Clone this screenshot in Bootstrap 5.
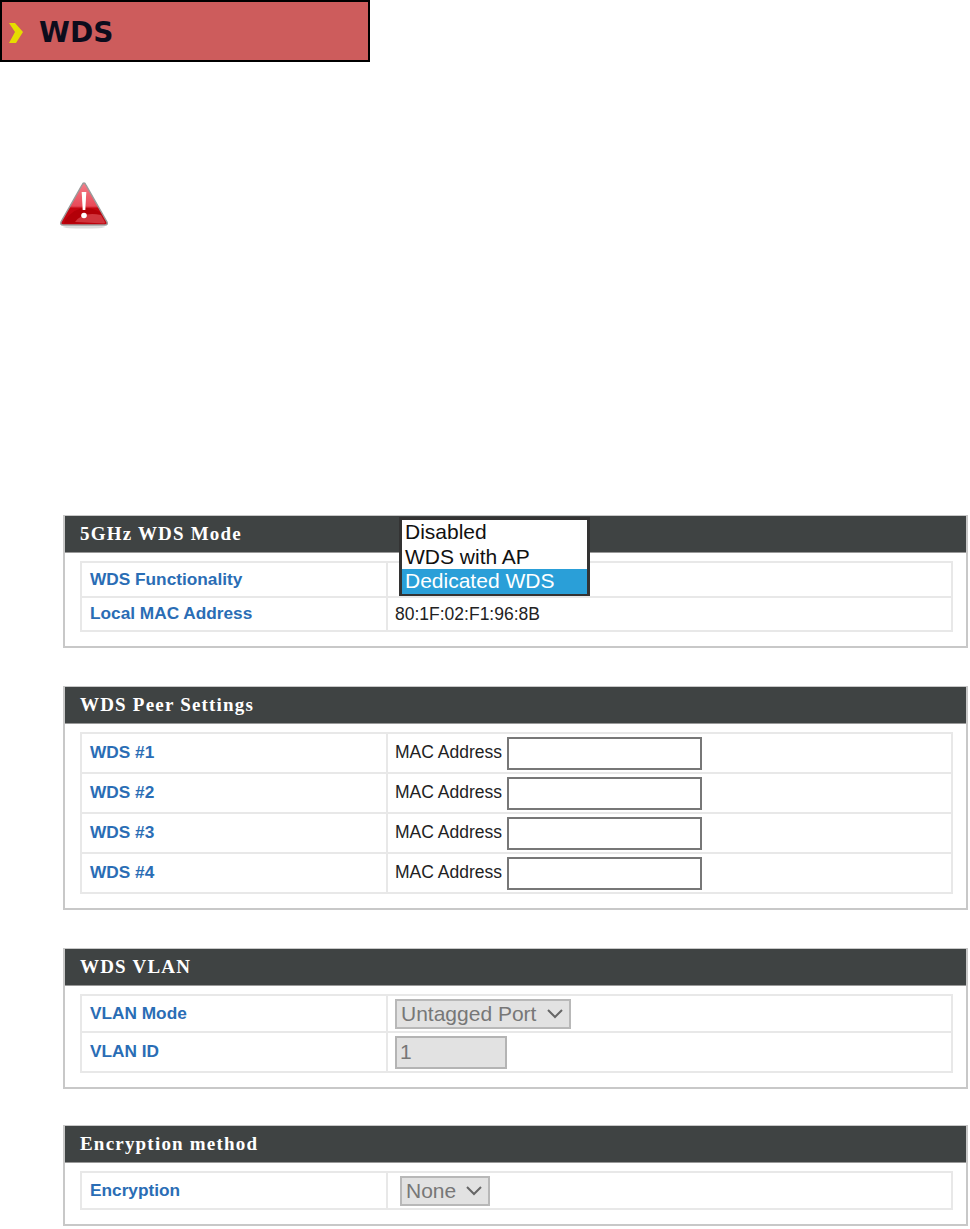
<!DOCTYPE html>
<html lang="en">
<head>
<meta charset="utf-8">
<title>WDS</title>
<link href="https://cdn.jsdelivr.net/npm/bootstrap@5.3.0/dist/css/bootstrap.min.css" rel="stylesheet">
<style>
html,body{background:#fff;margin:0;padding:0}
body{font-family:"Liberation Sans",Arial,sans-serif;color:#111;height:1229px;overflow:hidden}
.page-banner{width:370px;height:62px;background:#cd5c5c;border:2px solid #000;display:flex;align-items:center;gap:15px;padding:4px 0 0 6px}
.page-banner h1{font:700 28px/1 "DejaVu Sans",sans-serif;color:#0c0c1c;margin:0}
.alert-icon{display:block;margin:119px 0 0 59px}
.stack{margin:286px 2px 0 63px;display:flex;flex-direction:column}
.cfg-panel{border:2px solid #c8c8c8;border-top-width:1px;background:#fff;position:relative}
.cfg-title{background:#3f4343;color:#fff;font:700 19px/36px "Liberation Serif",serif;letter-spacing:1.2px;height:37px;padding-left:15px;border-bottom:1px solid #999}
.cfg-table{border-collapse:collapse;width:873px;margin:8px 0 0 15px;table-layout:fixed;--bs-table-bg:transparent}
.cfg-table td{border:2px solid #e8e8e8;padding:0 0 0 8px;vertical-align:middle;font-size:17.25px}
.cfg-table td:first-child{width:306px;font-weight:700;color:#2a6db5}
.cfg-table td:last-child{color:#222;padding-left:7px;font-size:17.5px}
.h-35{height:35px}.h-34{height:34px}.h-40{height:40px}.h-37{height:37px}
.mac-field{width:195px;height:33px;border:2px solid #777;background:#fff;margin-left:5px;vertical-align:middle;padding:0;border-radius:0}
.off-field{width:112px;height:33px;border:2px solid #b4b4b4;background:#e2e2e2;color:#777;font:21px "Liberation Sans",sans-serif;padding:0 0 0 3px;display:block;border-radius:0}
.off-select{appearance:none;-webkit-appearance:none;height:30px;border:2px solid #b8b8b8;background-color:#e2e2e2;color:#777;font:21px/26px "Liberation Sans",sans-serif;padding:0 0 0 4px;display:block;border-radius:0;opacity:1;
background-image:url("data:image/svg+xml,%3Csvg xmlns='http://www.w3.org/2000/svg' width='18' height='12'%3E%3Cpath d='M2 2l7 7 7-7' fill='none' stroke='%23666' stroke-width='2'/%3E%3C/svg%3E");background-repeat:no-repeat;background-position:right 5px center}
.sel-wide{width:176px}.sel-none{width:90px;margin-left:5px}
.pad-b14{padding-bottom:14px}
.gap-38{margin-top:38px}.gap-36{margin-top:36px}
.open-list{position:absolute;left:334px;top:1px;width:191px;height:79px;border:3px solid #333;background:#fff;font-size:21px;line-height:24.5px;color:#111;z-index:2;padding:0;margin:0;list-style:none}
.open-list li{padding-left:3px;height:24.5px}
.open-list li.is-sel{background:#2a9fd8;color:#fff;height:25px}
</style>
</head>
<body>
<div class="page-banner">
  <svg width="16" height="22" viewBox="0 0 16 22" aria-hidden="true"><path d="M1 1h6l8 9-7 11H1l6-11z" fill="#e6dc00"/></svg>
  <h1>WDS</h1>
</div>

<svg class="alert-icon" width="50" height="48" viewBox="0 0 50 48" aria-hidden="true">
  <defs>
    <linearGradient id="warnFill" x1="0" y1="0" x2="0" y2="1"><stop offset="0" stop-color="#f47c88"/><stop offset=".55" stop-color="#e84a58"/><stop offset=".6" stop-color="#c40610"/><stop offset="1" stop-color="#c20410"/></linearGradient>
  </defs>
  <ellipse cx="25" cy="46" rx="21" ry="1.6" fill="#ddd"/>
  <path d="M25 2 Q26 2 27 4 L48 41 Q49 44 46 44 H4 Q1 44 2 41 L23 4 Q24 2 25 2Z" fill="url(#warnFill)" stroke="#9a9a9a" stroke-width="1.5"/>
  <path d="M6 39 Q20 20 41 31 L46 41 Q46 42.500 45 42.500 H5Z" fill="#b30008"/>
  <path d="M16 41 Q24 30 42 34 L46 41 Q46 42.500 45 42.500Z" fill="#d0343c"/>
  <path d="M22.700 11h4.600l-1 18h-2.600z" fill="#fff"/>
  <circle cx="25" cy="34.500" r="2.800" fill="#fff"/>
</svg>

<div class="stack">
  <section class="cfg-panel pad-b14">
    <div class="cfg-title">5GHz WDS Mode</div>
    <table class="cfg-table">
      <tr class="h-35"><td>WDS Functionality</td><td></td></tr>
      <tr class="h-34"><td>Local MAC Address</td><td>80:1F:02:F1:96:8B</td></tr>
    </table>
    <ul class="open-list">
      <li>Disabled</li>
      <li>WDS with AP</li>
      <li class="is-sel">Dedicated WDS</li>
    </ul>
  </section>

  <section class="cfg-panel pad-b14 gap-38">
    <div class="cfg-title">WDS Peer Settings</div>
    <table class="cfg-table">
      <tr class="h-40"><td>WDS #1</td><td>MAC Address<input class="mac-field" type="text" aria-label="WDS 1 MAC"></td></tr>
      <tr class="h-40"><td>WDS #2</td><td>MAC Address<input class="mac-field" type="text" aria-label="WDS 2 MAC"></td></tr>
      <tr class="h-40"><td>WDS #3</td><td>MAC Address<input class="mac-field" type="text" aria-label="WDS 3 MAC"></td></tr>
      <tr class="h-40"><td>WDS #4</td><td>MAC Address<input class="mac-field" type="text" aria-label="WDS 4 MAC"></td></tr>
    </table>
  </section>

  <section class="cfg-panel pad-b14 gap-38">
    <div class="cfg-title">WDS VLAN</div>
    <table class="cfg-table">
      <tr class="h-37"><td>VLAN Mode</td><td><select class="off-select sel-wide" disabled aria-label="VLAN Mode"><option>Untagged Port</option></select></td></tr>
      <tr class="h-40"><td>VLAN ID</td><td><input class="off-field" type="text" value="1" disabled aria-label="VLAN ID"></td></tr>
    </table>
  </section>

  <section class="cfg-panel pad-b14 gap-36">
    <div class="cfg-title">Encryption method</div>
    <table class="cfg-table">
      <tr class="h-37"><td>Encryption</td><td><select class="off-select sel-none" disabled aria-label="Encryption"><option>None</option></select></td></tr>
    </table>
  </section>
</div>
<script src="https://cdn.jsdelivr.net/npm/bootstrap@5.3.0/dist/js/bootstrap.bundle.min.js"></script>
</body>
</html>
